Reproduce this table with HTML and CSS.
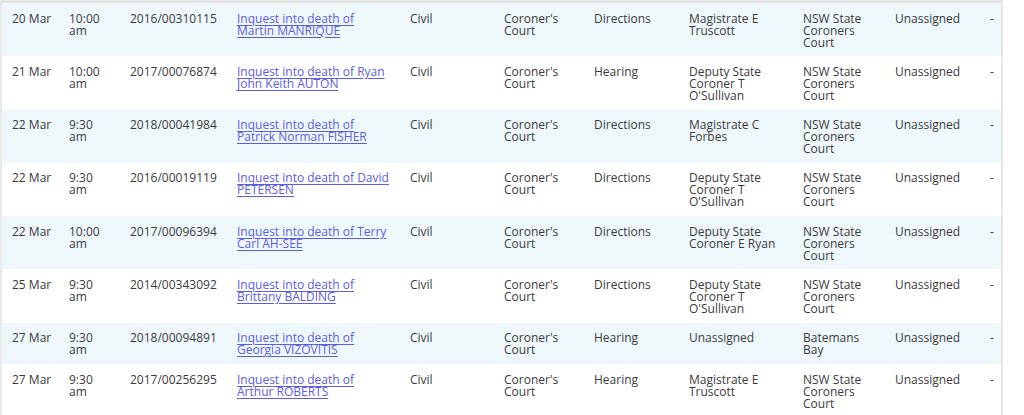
FILE: index.html
```html
<!DOCTYPE html>
<html>
<head>
<meta charset="utf-8">
<link rel="stylesheet" href="styles.css">
</head>
<body>
<div class="frame">
  <table class="listing">
    <colgroup>
      <col class="c-date"><col class="c-time"><col class="c-case"><col class="c-title"><col class="c-jur"><col class="c-court"><col class="c-type"><col class="c-officer"><col class="c-loc"><col class="c-room"><col class="c-dash">
    </colgroup>
    <tbody>
      <tr class="alt">
        <td class="nw">20 Mar</td><td>10:00 am</td><td>2016/00310115</td>
        <td><a href="#">Inquest into death of Martin MANRIQUE</a></td>
        <td>Civil</td><td>Coroner's Court</td><td>Directions</td><td>Magistrate E Truscott</td><td>NSW State Coroners Court</td><td>Unassigned</td><td>-</td>
      </tr>
      <tr>
        <td class="nw">21 Mar</td><td>10:00 am</td><td>2017/00076874</td>
        <td><a href="#">Inquest into death of Ryan John Keith AUTON</a></td>
        <td>Civil</td><td>Coroner's Court</td><td>Hearing</td><td>Deputy State Coroner T O'Sullivan</td><td>NSW State Coroners Court</td><td>Unassigned</td><td>-</td>
      </tr>
      <tr class="alt">
        <td class="nw">22 Mar</td><td>9:30 am</td><td>2018/00041984</td>
        <td><a href="#">Inquest into death of Patrick Norman FISHER</a></td>
        <td>Civil</td><td>Coroner's Court</td><td>Directions</td><td>Magistrate C Forbes</td><td>NSW State Coroners Court</td><td>Unassigned</td><td>-</td>
      </tr>
      <tr>
        <td class="nw">22 Mar</td><td>9:30 am</td><td>2016/00019119</td>
        <td><a href="#">Inquest into death of David PETERSEN</a></td>
        <td>Civil</td><td>Coroner's Court</td><td>Directions</td><td>Deputy State Coroner T O'Sullivan</td><td>NSW State Coroners Court</td><td>Unassigned</td><td>-</td>
      </tr>
      <tr class="alt">
        <td class="nw">22 Mar</td><td>10:00 am</td><td>2017/00096394</td>
        <td><a href="#">Inquest into death of Terry Carl AH-SEE</a></td>
        <td>Civil</td><td>Coroner's Court</td><td>Directions</td><td>Deputy State Coroner E Ryan</td><td>NSW State Coroners Court</td><td>Unassigned</td><td>-</td>
      </tr>
      <tr>
        <td class="nw">25 Mar</td><td>9:30 am</td><td>2014/00343092</td>
        <td><a href="#">Inquest into death of Brittany BALDING</a></td>
        <td>Civil</td><td>Coroner's Court</td><td>Directions</td><td>Deputy State Coroner T O'Sullivan</td><td>NSW State Coroners Court</td><td>Unassigned</td><td>-</td>
      </tr>
      <tr class="alt">
        <td class="nw">27 Mar</td><td>9:30 am</td><td>2018/00094891</td>
        <td><a href="#">Inquest into death of Georgia VIZOVITIS</a></td>
        <td>Civil</td><td>Coroner's Court</td><td>Hearing</td><td>Unassigned</td><td>Batemans Bay</td><td>Unassigned</td><td>-</td>
      </tr>
      <tr>
        <td class="nw">27 Mar</td><td>9:30 am</td><td>2017/00256295</td>
        <td><a href="#">Inquest into death of Arthur ROBERTS</a></td>
        <td>Civil</td><td>Coroner's Court</td><td>Hearing</td><td>Magistrate E Truscott</td><td>NSW State Coroners Court</td><td>Unassigned</td><td>-</td>
      </tr>
    </tbody>
  </table>
</div>
</body>
</html>
```

FILE: styles.css
```css
html, body {
  margin: 0;
  padding: 0;
  background: #ffffff;
}
body {
  font-family: "Open Sans", "Noto Sans", sans-serif;
  font-size: 12px;
  color: #3a3a3a;
}
.frame {
  width: 999px;
  border-left: 2px solid #e9e9e9;
  border-right: 2px solid #e6e6e6;
  border-top: 3px solid #e6e6e6;
  height: 412px;
  overflow: hidden;
}
.listing {
  width: 999px;
  table-layout: fixed;
  border-collapse: collapse;
}
.listing td {
  vertical-align: top;
  padding: 9.5px 8px 7.8px 10px;
  line-height: 12px;
}
.listing tr.alt {
  background: #eef8fb;
}
.listing .nw { white-space: nowrap; }
.listing a {
  color: #5c5ce0;
  text-decoration: underline;
  text-underline-offset: 2px;
}
.c-date { width: 57px; }
.c-time { width: 61px; }
.c-case { width: 107px; }
.c-title { width: 173px; }
.c-jur { width: 94px; }
.c-court { width: 90px; }
.c-type { width: 95px; }
.c-officer { width: 114px; }
.c-loc { width: 92px; }
.c-room { width: 95px; }
.c-dash { width: 21px; }
```
